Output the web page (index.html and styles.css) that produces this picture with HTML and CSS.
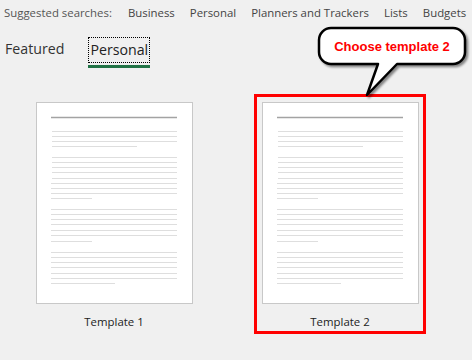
FILE: index.html
```html
<!DOCTYPE html>
<html lang="en">
<head>
	<meta charset="UTF-8">
	<title>Templates</title>
	<link rel="stylesheet" href="styles.css">
</head>
<body>
	<svg class="defs" width="0" height="0">
		<symbol id="thumb" viewBox="0 0 155 200">
			<line class="head" x1="14" y1="14.5" x2="140" y2="14.5"/>
			<g class="body">
				<line x1="15" y1="28.5" x2="140" y2="28.5"/>
				<line x1="15" y1="33.5" x2="140" y2="33.5"/>
				<line x1="15" y1="38.5" x2="140" y2="38.5"/>
				<line x1="15" y1="43.5" x2="100" y2="43.5"/>
				<line x1="15" y1="54.5" x2="140" y2="54.5"/>
				<line x1="15" y1="59.5" x2="140" y2="59.5"/>
				<line x1="15" y1="64.5" x2="140" y2="64.5"/>
				<line x1="15" y1="69.5" x2="140" y2="69.5"/>
				<line x1="15" y1="75.5" x2="140" y2="75.5"/>
				<line x1="14" y1="80.5" x2="140" y2="80.5"/>
				<line x1="14" y1="85.5" x2="140" y2="85.5"/>
				<line x1="14" y1="90.5" x2="140" y2="90.5"/>
				<line x1="14" y1="95.5" x2="55" y2="95.5"/>
				<line x1="14" y1="106.5" x2="140" y2="106.5"/>
				<line x1="14" y1="111.5" x2="140" y2="111.5"/>
				<line x1="14" y1="116.5" x2="140" y2="116.5"/>
				<line x1="14" y1="121.5" x2="140" y2="121.5"/>
				<line x1="14" y1="127.5" x2="140" y2="127.5"/>
				<line x1="14" y1="132.5" x2="140" y2="132.5"/>
				<line x1="14" y1="138.5" x2="55" y2="138.5"/>
				<line x1="14" y1="149.5" x2="140" y2="149.5"/>
				<line x1="14" y1="154.5" x2="140" y2="154.5"/>
				<line x1="14" y1="159.5" x2="140" y2="159.5"/>
				<line x1="14" y1="164.5" x2="140" y2="164.5"/>
				<line x1="14" y1="170.5" x2="140" y2="170.5"/>
				<line x1="14" y1="175.5" x2="140" y2="175.5"/>
				<line x1="14" y1="180.5" x2="78" y2="180.5"/>
			</g>
		</symbol>
	</svg>

	<div class="suggested">
		<span class="suggested_label">Suggested searches:</span>
		<a class="suggested_item">Business</a>
		<a class="suggested_item">Personal</a>
		<a class="suggested_item">Planners and Trackers</a>
		<a class="suggested_item">Lists</a>
		<a class="suggested_item">Budgets</a>
	</div>

	<div class="tabs">
		<div class="tab">Featured</div>
		<div class="tab tab_active"><span class="tab_focus">Personal</span></div>
	</div>

	<div class="cards">
		<div class="card">
			<div class="page"><svg width="155" height="200"><use href="#thumb"/></svg></div>
			<div class="card_name">Template 1</div>
		</div>
		<div class="card card_marked">
			<div class="page"><svg width="155" height="200"><use href="#thumb"/></svg></div>
			<div class="card_name">Template 2</div>
		</div>
	</div>

	<!-- callout -->
	<svg class="bubble" width="156" height="75" viewBox="0 0 156 75">
		<path d="M15 3H137A12 12 0 0 1 149 15V27A12 12 0 0 1 137 39H81L51 70L62 39H15A12 12 0 0 1 3 27V15A12 12 0 0 1 15 3Z"/>
	</svg>
	<div class="bubble_text">Choose template 2</div>
</body>
</html>
```

FILE: styles.css
```css
html,body{
	margin:0;
	padding:0;
}
body{
	width:472px;
	height:360px;
	position:relative;
	overflow:hidden;
	background-color:#f0f0f0;
	font-family:"Open Sans","Noto Sans",sans-serif;
	color:#444;
}
.defs{
	position:absolute;
}
.suggested{
	display:flex;
	align-items:center;
	height:24px;
	padding-left:4px;
	font-size:11.4px;
	white-space:nowrap;
}
.suggested_label{
	color:#555;
	margin-right:16px;
}
.suggested_item{
	color:#444;
	margin-right:15px;
}
.tabs{
	display:flex;
	align-items:flex-start;
	padding:13px 0 0 5px;
	height:32px;
}
.tab{
	font-size:14.2px;
	color:#333;
	line-height:24px;
	margin-right:26px;
}
.tab_active{
	border-bottom:3px solid #217346;
	margin-left:-2px;
}
.tab_focus{
	display:block;
	border:1px dotted #000;
	padding:0 1px;
	margin-bottom:2px;
	color:#222;
}
.cards{
	display:flex;
	gap:54px;
	padding:25px 0 0 28px;
}
.card{
	width:166px;
	border:3px solid transparent;
	padding:5px 0 0 0;
	display:flex;
	flex-direction:column;
	align-items:center;
}
.card_marked{
	border-color:#ff0000;
}
.page{
	width:155px;
	height:200px;
	border:1px solid #c8c8c8;
	background:#fff;
}
.page svg{
	display:block;
}
.head{
	stroke:#a3a3a3;
	stroke-width:1.5;
}
.body line{
	stroke:#dedede;
	stroke-width:1;
}
.card_name{
	font-size:11.4px;
	color:#222;
	line-height:18px;
	padding:9px 0 0;
}
.bubble{
	position:absolute;
	left:316px;
	top:25px;
	overflow:visible;
	filter:drop-shadow(2px 2px 1px rgba(0,0,0,0.45));
}
.bubble path{
	fill:#fff;
	stroke:#000;
	stroke-width:2.5;
	stroke-linejoin:round;
}
.bubble_text{
	position:absolute;
	left:319px;
	top:28px;
	width:146px;
	height:36px;
	display:flex;
	align-items:center;
	justify-content:center;
	font-family:"Liberation Sans",sans-serif;
	font-weight:bold;
	font-size:13px;
	color:#ff0000;
}
```
